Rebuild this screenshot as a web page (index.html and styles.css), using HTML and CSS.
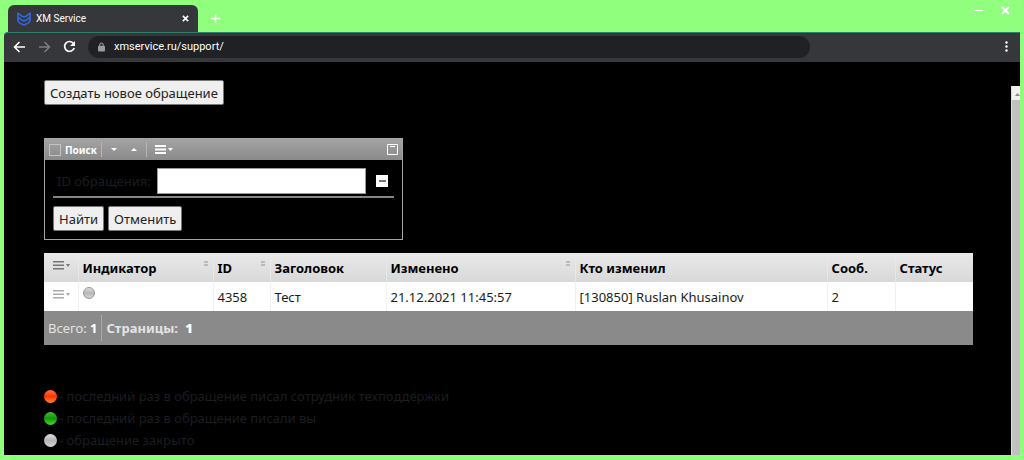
FILE: index.html
```html
<!DOCTYPE html>
<html lang="ru">
<head>
    <meta charset="UTF-8">
    <meta name="viewport" content="width=device-width, initial-scale=1.0">
    <title>XM Service</title>
    <link rel="stylesheet" href="styles.css">
</head>
<body>
    <div class="browser">
        <div class="tab-bar">
            <div class="tab">
                <svg class="tab-logo" width="14" height="14" viewBox="0 0 14 14" fill="none" stroke="#3367e0" stroke-width="1.600">
                    <path d="M1 1l3.500 3L7 5l2.500-1L13 1M1 5l3.500 3L7 9l2.500-1L13 5M1 .5V8.500c0 2 3 3.500 6 4.500 3-1 6-2.500 6-4.500V.5"/>
                </svg>
                <span class="tab-title">XM Service</span>
                <button class="tab-close" aria-label="Закрыть вкладку">
                    <svg width="7" height="7" viewBox="0 0 8 8" stroke="#fff" stroke-width="1.800"><path d="M1 1l6 6M7 1L1 7"/></svg>
                </button>
            </div>
            <button class="new-tab" aria-label="Новая вкладка">
                <svg width="9" height="9" viewBox="0 0 9 9" stroke="#fff" stroke-width="1.500"><path d="M4.500 0v9M0 4.500h9"/></svg>
            </button>
            <div class="window-buttons">
                <button aria-label="Свернуть">
                    <svg width="9" height="9" viewBox="0 0 9 9" stroke="#fff"><path d="M0 4.500h9"/></svg>
                </button>
                <button aria-label="Закрыть">
                    <svg width="9" height="9" viewBox="0 0 9 9" stroke="#fff" stroke-width="2"><path d="M1 1l7 7M8 1L1 8"/></svg>
                </button>
            </div>
        </div>

        <div class="toolbar">
            <button aria-label="Назад">
                <svg width="13" height="12" viewBox="0 0 13 12" fill="none" stroke="#fff" stroke-width="1.600"><path d="M12 6H2M6.500 1L1.500 6l5 5"/></svg>
            </button>
            <button aria-label="Вперёд">
                <svg width="13" height="12" viewBox="0 0 13 12" fill="none" stroke="#7d7e81" stroke-width="1.500"><path d="M1 6h10M6.500 1l5 5-5 5"/></svg>
            </button>
            <button aria-label="Обновить">
                <svg width="13" height="13" viewBox="0 0 13 13"><path d="M10.500 3.500A4.900 4.900 0 1 0 11.200 8" fill="none" stroke="#fff" stroke-width="1.700"/><path d="M12 1v5H7z" fill="#fff"/></svg>
            </button>
            <div class="address">
                <svg width="7" height="10" viewBox="0 0 8 10"><path d="M2 4V2.500a2 2 0 0 1 4 0V4" fill="none" stroke="#9a9b9e" stroke-width="1.200"/><rect y="3.500" width="8" height="6.500" rx="1" fill="#9a9b9e"/></svg>
                <input type="text" value="xmservice.ru/support/" aria-label="Адресная строка">
            </div>
            <button class="menu" aria-label="Меню">
                <svg width="3" height="11" viewBox="0 0 3 11" fill="#fff"><circle cx="1.500" cy="1.500" r="1.200"/><circle cx="1.500" cy="5.500" r="1.200"/><circle cx="1.500" cy="9.500" r="1.200"/></svg>
            </button>
        </div>

        <div class="viewport">
            <main class="page">
                <button class="btn">Создать новое обращение</button>

                <form class="search">
                    <div class="search-header">
                        <input type="checkbox" id="searchToggle" class="search-check">
                        <label for="searchToggle">Поиск</label>
                        <span class="divider"></span>
                        <button type="button" class="icon-btn" aria-label="Вниз">
                            <svg width="6" height="3" viewBox="0 0 6 3" fill="#fff"><path d="M0 0h6L3 3z"/></svg>
                        </button>
                        <button type="button" class="icon-btn" aria-label="Вверх">
                            <svg width="6" height="3" viewBox="0 0 6 3" fill="#fff"><path d="M0 3h6L3 0z"/></svg>
                        </button>
                        <span class="divider"></span>
                        <button type="button" class="icon-btn filter-menu" aria-label="Настроить фильтр">
                            <svg width="18" height="9" viewBox="0 0 18 9" fill="#fff"><path d="M0 0h11v2H0zM0 3.500h11v2H0zM0 7h11v2H0zM13 3h5l-2.500 3z"/></svg>
                        </button>
                        <button type="button" class="icon-btn collapse" aria-label="Свернуть фильтр">
                            <svg width="11" height="11" viewBox="0 0 11 11" fill="none" stroke="#fff"><path d="M.5 .5h10v10H.5zM3 2.500h5"/></svg>
                        </button>
                    </div>
                    <div class="search-body">
                        <div class="search-row">
                            <label for="ticketId">ID обращения:</label>
                            <input type="text" id="ticketId" class="field">
                            <button type="button" class="remove" aria-label="Убрать поле">
                                <svg width="7" height="2" viewBox="0 0 7 2" fill="#777"><path d="M0 0h7v2H0z"/></svg>
                            </button>
                        </div>
                        <div class="search-actions">
                            <button type="button" class="btn">Найти</button>
                            <button type="button" class="btn">Отменить</button>
                        </div>
                    </div>
                </form>

                <table class="tickets">
                    <colgroup>
                        <col class="col-menu">
                        <col class="col-lamp">
                        <col class="col-id">
                        <col class="col-title">
                        <col class="col-date">
                        <col class="col-author">
                        <col class="col-count">
                        <col class="col-status">
                    </colgroup>
                    <thead>
                        <tr>
                            <th>
                                <button type="button" class="icon-btn row-menu" aria-label="Настроить таблицу">
                                    <svg width="17" height="9" viewBox="0 0 17 9" fill="#777"><path d="M0 0h11v1.500H0zM0 3.500h11V5H0zM0 7h11v1.500H0zM13 3h4l-2 3z"/></svg>
                                </button>
                            </th>
                            <th class="sortable">Индикатор</th>
                            <th class="sortable">ID</th>
                            <th>Заголовок</th>
                            <th class="sortable">Изменено</th>
                            <th>Кто изменил</th>
                            <th>Сооб.</th>
                            <th>Статус</th>
                        </tr>
                    </thead>
                    <tbody>
                        <tr>
                            <td>
                                <button type="button" class="icon-btn row-menu" aria-label="Действия">
                                    <svg width="17" height="9" viewBox="0 0 17 9" fill="#aaa"><path d="M0 0h11v1.500H0zM0 3.500h11V5H0zM0 7h11v1.500H0zM13 3h4l-2 3z"/></svg>
                                </button>
                            </td>
                            <td><span class="lamp lamp-outline"></span></td>
                            <td>4358</td>
                            <td>Тест</td>
                            <td>21.12.2021 11:45:57</td>
                            <td>[130850] Ruslan Khusainov</td>
                            <td>2</td>
                            <td></td>
                        </tr>
                    </tbody>
                </table>
                <div class="table-footer">
                    <span class="total">Всего: <b>1</b></span>
                    <span class="pages">Страницы: <b>1</b></span>
                </div>

                <ul class="legend">
                    <li><span class="lamp lamp-red"></span>- последний раз в обращение писал сотрудник техподдержки</li>
                    <li><span class="lamp lamp-green"></span>- последний раз в обращение писали вы</li>
                    <li><span class="lamp"></span>- обращение закрыто</li>
                </ul>
            </main>
            <div class="scrollbar">
                <svg width="5" height="3" viewBox="0 0 5 3" fill="#888"><path d="M0 3h5L2.500 0z"/></svg>
            </div>
        </div>
    </div>
</body>
</html>
```

FILE: styles.css
```css
*,
*::after {
    margin: 0;
    padding: 0;
    box-sizing: border-box;
}

body {
    font-family: "Noto Sans", "Open Sans", sans-serif;
    font-size: 13px;
    line-height: 18px;
    background: #90ff7e;
    color: #1b1d20;
    min-height: 100vh;
    padding: 5px 4px;
    display: flex;
}

button {
    background: none;
    border: none;
    font: inherit;
    color: inherit;
    display: flex;
    align-items: center;
    justify-content: center;
    cursor: pointer;
}

.browser {
    flex: 1;
    display: flex;
    flex-direction: column;
}

/* browser chrome */
.tab-bar {
    display: flex;
    height: 27px;
    padding-left: 4px;
}

.tab {
    width: 190px;
    display: flex;
    align-items: center;
    gap: 5px;
    padding: 0 9px;
    background: #36373b;
    border-radius: 6px 6px 0 0;
}

.tab-title {
    flex: 1;
    font-family: Roboto, sans-serif;
    font-size: 10px;
    color: #fff;
}

.new-tab {
    width: 34px;
}

.window-buttons {
    margin-left: auto;
    display: flex;
    align-items: flex-start;
    gap: 18px;
    padding: 1px 10px 0 0;
}

.toolbar {
    display: flex;
    align-items: center;
    gap: 12px;
    height: 30px;
    padding: 0 12px 2px 9px;
    background: #36373b;
    border-top: 1px solid #2d7f6c;
    border-radius: 4px 0 0 0;
}

.address {
    flex: 0 1 722px;
    display: flex;
    align-items: center;
    gap: 9px;
    height: 22px;
    padding: 0 10px;
    background: #202124;
    border-radius: 11px;
}

.address input {
    flex: 1;
    background: none;
    border: none;
    outline: none;
    color: #fff;
    font-family: Roboto, sans-serif;
    font-size: 11px;
}

.menu {
    margin-left: auto;
}

.viewport {
    flex: 1;
    display: flex;
    background: #000;
}

.scrollbar {
    width: 9px;
    margin-top: 24px;
    padding: 7px 0 0 3px;
    background: linear-gradient(#f1f1f1 14px, #c1c1c1 14px);
    border-left: 1px solid #ddd;
}

.scrollbar svg {
    display: block;
}

/* page */
.page {
    flex: 1;
    padding: 18px 38px 0 40px;
}

.btn {
    height: 25px;
    padding: 0 5px;
    background: #efefef;
    border: 1px solid #777;
    border-radius: 2px;
    color: #222;
}

.search {
    width: 359px;
    margin-top: 33px;
    border: 1px solid #a5a5a5;
}

.search-header {
    display: flex;
    align-items: center;
    gap: 4px;
    height: 21px;
    padding: 0 4px;
    background: linear-gradient(#a3a3a3, #8a8a8a);
    color: #fff;
    font-size: 10px;
    font-weight: bold;
}

.search-check {
    appearance: none;
    width: 12px;
    height: 12px;
    border: 1px solid #c4c4c4;
}

.divider {
    width: 1px;
    height: 15px;
    background: #b8b8b8;
}

.icon-btn {
    min-width: 16px;
    height: 16px;
}

.filter-menu {
    padding-left: 4px;
}

.search-header .collapse {
    margin: 0 -2px 0 auto;
}

.search-body {
    padding: 8px;
}

.search-row {
    display: flex;
    align-items: center;
    padding: 0 6px 2px 4px;
    border-bottom: 2px solid #858585;
}

.field {
    flex: 1;
    min-width: 0;
    height: 26px;
    margin: 0 10px 0 6px;
    padding: 0 5px;
    border: 1px solid #999;
    background: #fff;
    font: inherit;
}

.remove {
    width: 12px;
    height: 12px;
    background: #fff;
}

.search-actions {
    display: flex;
    gap: 4px;
    padding-top: 8px;
}

.tickets {
    width: 100%;
    margin-top: 13px;
    border-collapse: collapse;
    table-layout: fixed;
    background: #fff;
}

.col-menu { width: 34px; }
.col-lamp { width: 135px; }
.col-id { width: 57px; }
.col-title { width: 116px; }
.col-date { width: 189px; }
.col-author { width: 252px; }
.col-count { width: 68px; }
.col-status { width: 78px; }

.tickets th,
.tickets td {
    height: 29px;
    padding: 0 4px;
    text-align: left;
    white-space: nowrap;
}

.tickets th {
    background: linear-gradient(#e9e9e9, #d8d8d8);
    color: #000;
}

.tickets th + th {
    border-left: 1px solid #e8e8e8;
}

.tickets td + td {
    border-left: 1px solid #f0f0f0;
}

.row-menu {
    margin: -4px 0 0 5px;
}

.sortable {
    position: relative;
}

.sortable::after {
    content: "";
    position: absolute;
    top: 8px;
    right: 5px;
    width: 4px;
    height: 5px;
    border: solid #bbb;
    border-width: 2px 0;
}

.table-footer {
    display: flex;
    align-items: center;
    height: 34px;
    padding: 0 4px;
    background: #8a8a8a;
    color: #e4e4e4;
}

.table-footer b {
    color: #fff;
}

.total {
    padding: 4px 4px 4px 0;
    border-right: 1px solid #aaa;
}

.pages {
    padding-left: 4px;
    font-weight: bold;
}

.pages b {
    margin-left: 4px;
}

.lamp {
    width: 13px;
    height: 13px;
    border-radius: 50%;
    background: linear-gradient(#ddd, #b5b5b5 50%, #d5d5d5);
}

.lamp-outline {
    display: block;
    width: 12px;
    height: 12px;
    margin-top: -8px;
    border: 1px solid #999;
}

.lamp-red {
    background: linear-gradient(#ff7045, #ff3500 50%, #ff8a30);
}

.lamp-green {
    background: linear-gradient(#48b83a, #0d9a0d 50%, #55cc35);
}

.legend {
    margin-top: 40px;
    list-style: none;
}

.legend li {
    display: flex;
    align-items: center;
    gap: 2px;
    height: 22px;
}
```
